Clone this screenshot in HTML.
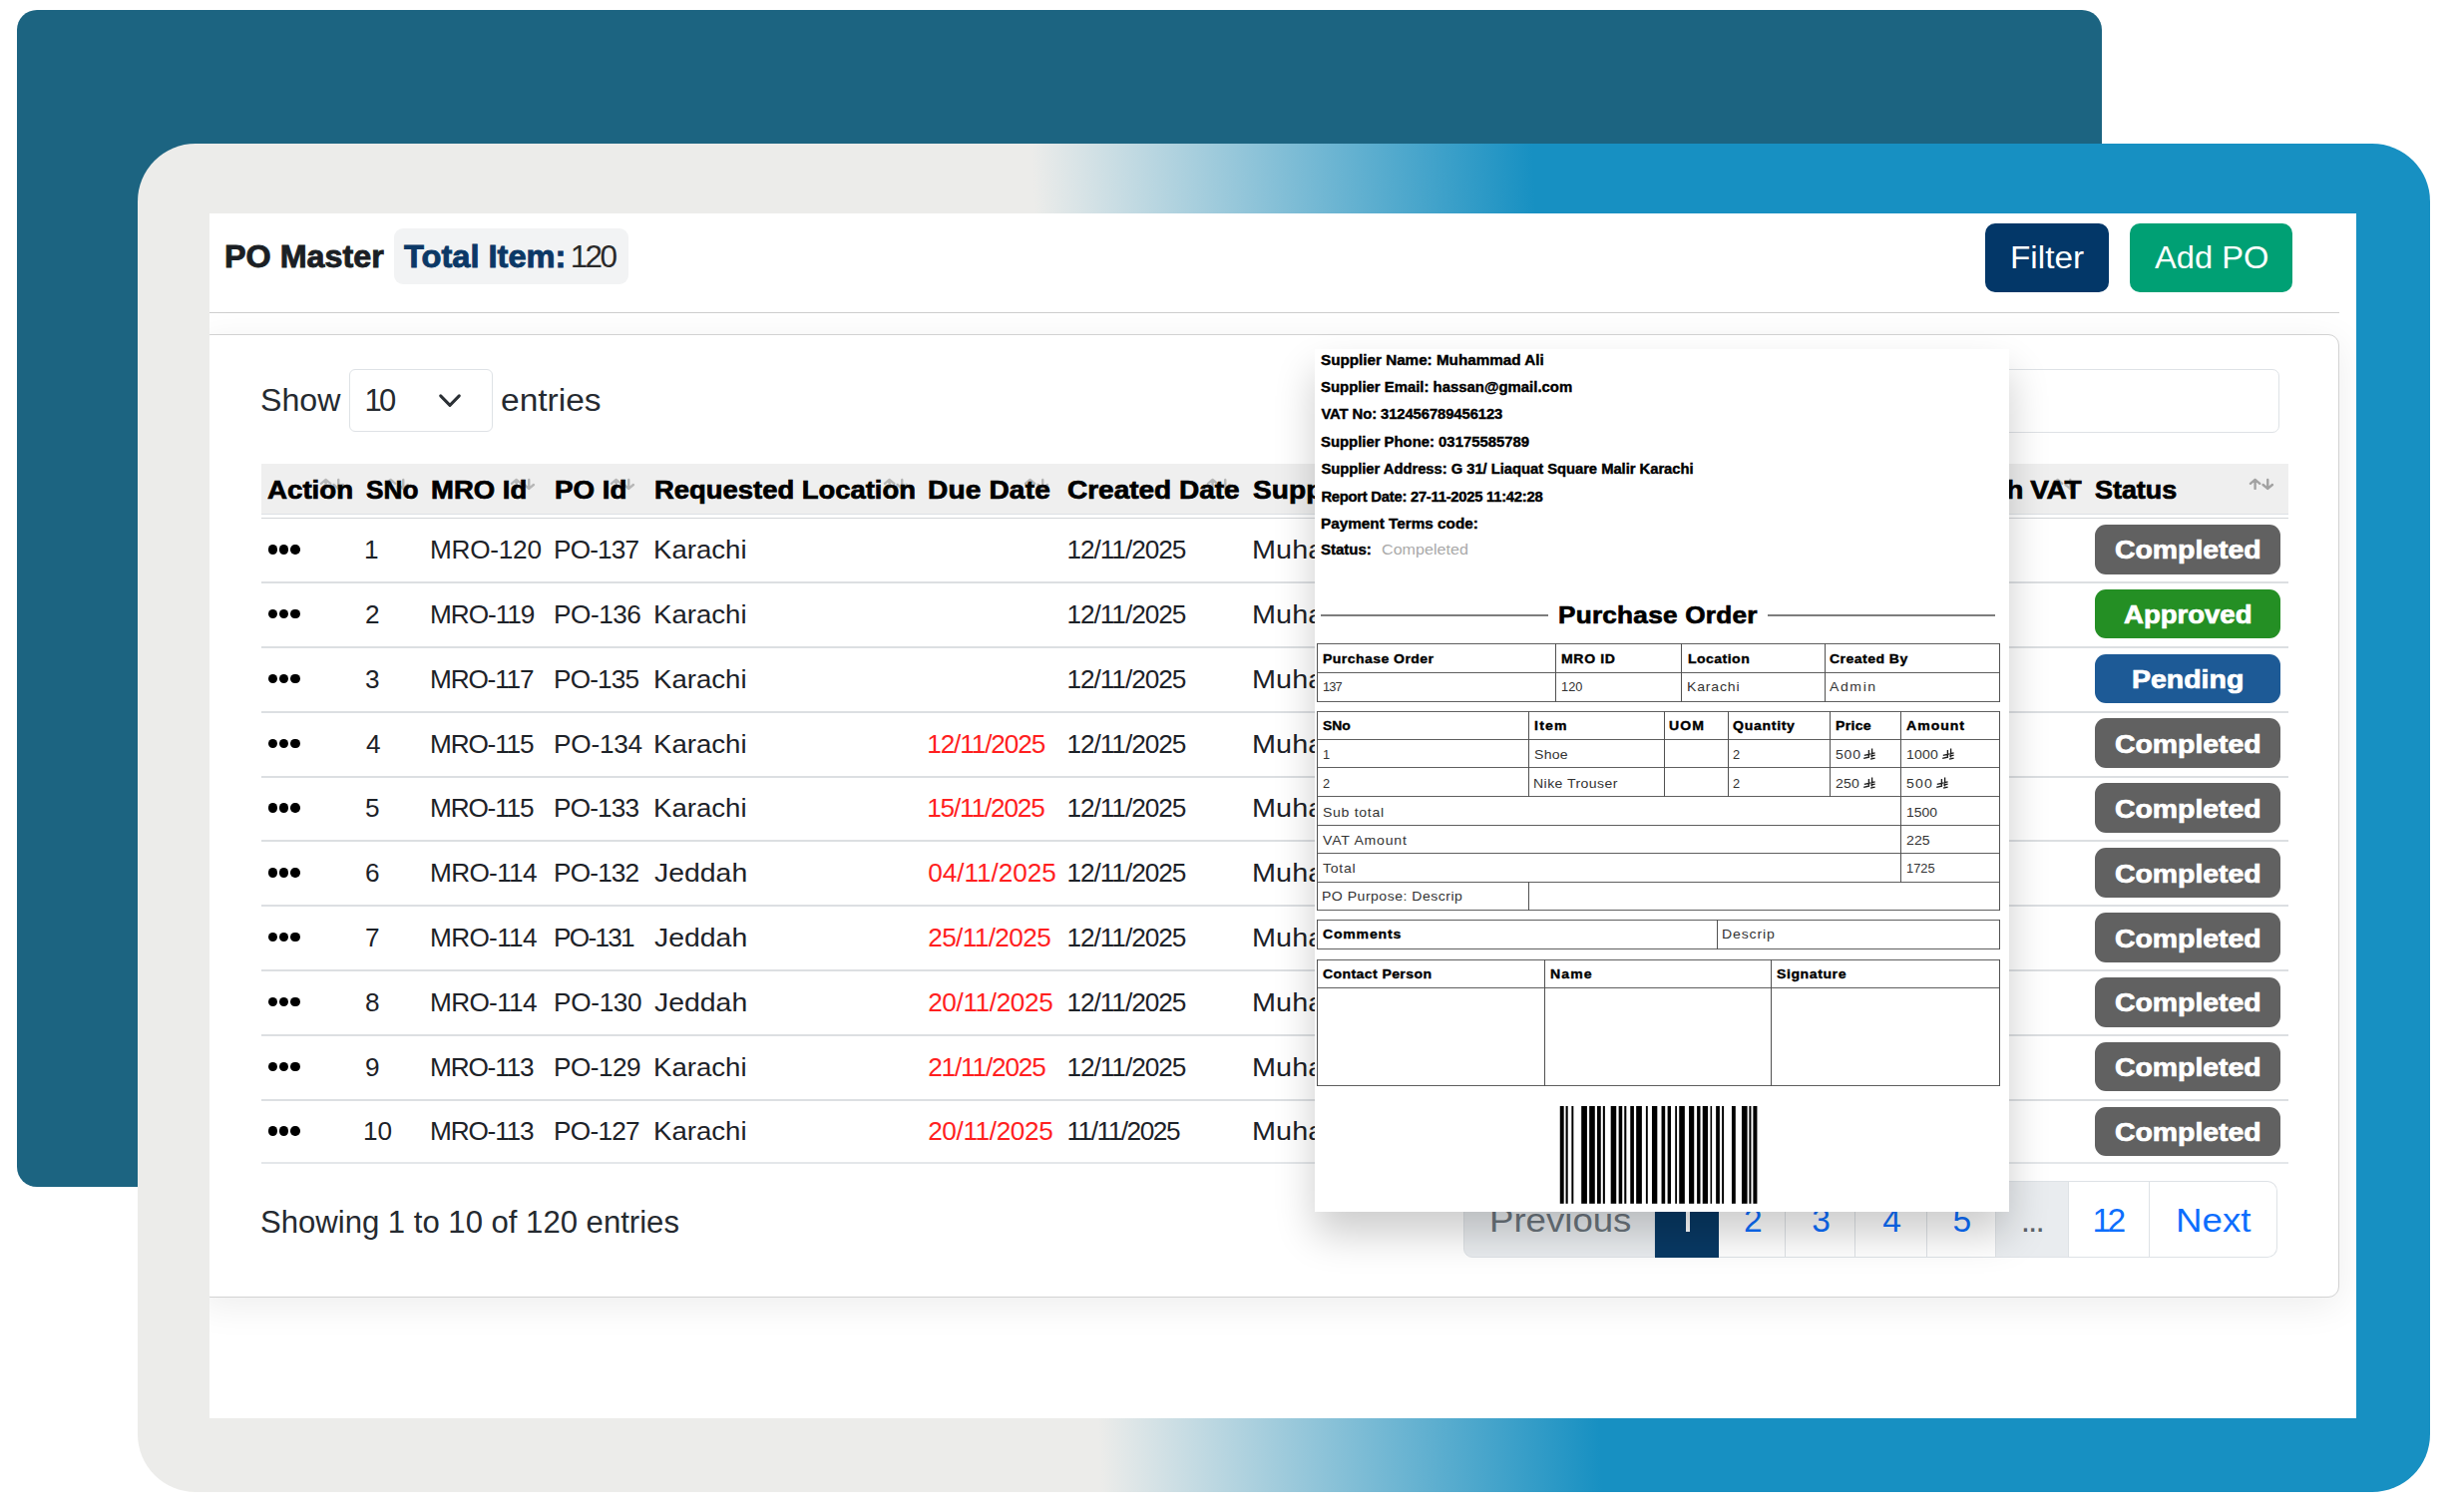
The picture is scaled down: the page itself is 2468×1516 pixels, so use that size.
<!DOCTYPE html>
<html lang="en"><head><meta charset="utf-8"><title>PO Master</title>
<style>
html,body{margin:0;padding:0;background:#fff}
body{width:2468px;height:1516px;position:relative;overflow:hidden;font-family:"Liberation Sans", sans-serif}
.b,.t{position:absolute}
.t{white-space:nowrap;line-height:1;transform-origin:0 0}
#back{left:17px;top:10px;width:2090px;height:1180px;background:#1c6481;border-radius:20px}
#panel{left:138px;top:144px;width:2298px;height:1352px;border-radius:58px;background:linear-gradient(87deg,#ececea 40.8%,#1790c2 62%)}
#card{left:210px;top:214px;width:2152px;height:1208px;background:#fff;overflow:hidden}
#ov{left:1318px;top:350px;width:696px;height:865px;background:#fff;box-shadow:0 22px 38px rgba(0,0,0,.20)}
</style></head>
<body>
<div id="back" class="b"></div>
<div id="panel" class="b"></div>
<div id="card" class="b">
<div class="b" style="left:184.5px;top:14.5px;width:235.2px;height:56.5px;background:#f2f3f4;border-radius:9px"></div>
<div class="b" style="left:1780.4px;top:9.5px;width:123.5px;height:69px;background:#033768;border-radius:10px"></div>
<div class="b" style="left:1925.2px;top:9.5px;width:163.1px;height:69px;background:#00a074;border-radius:10px"></div>
<div class="b" style="left:0px;top:98.6px;width:2134.7px;height:1.2px;background:#cfcfcf"></div>
<div class="b" style="left:-10px;top:121px;width:2144.5px;height:965.5px;border:1px solid #d2d2d2;border-radius:11px;box-shadow:0 8px 38px rgba(0,0,0,.075);box-sizing:border-box;background:#fff"></div>
<div class="b" style="left:140px;top:156px;width:144px;height:62.5px;border:1px solid #dee2e6;border-radius:6px;box-sizing:border-box;background:#fff"></div>
<svg class="b" style="left:228px;top:179.6px" width="26" height="17" viewBox="0 0 26 17"><path d="M3.7 2.9 L13 12.4 L22.3 2.9" fill="none" stroke="#2b3035" stroke-width="3" stroke-linecap="round" stroke-linejoin="round"/></svg>
<div class="b" style="left:1780px;top:156px;width:295px;height:63.5px;border:1px solid #dee2e6;border-radius:7px;box-sizing:border-box;background:#fff"></div>
<div class="b" style="left:52px;top:251px;width:2031.5px;height:50px;background:#efefef"></div>
<div class="b" style="left:52px;top:301px;width:2031.5px;height:1px;background:#dde1e5"></div>
<div class="b" style="left:52px;top:305px;width:2031.5px;height:1px;background:#d3d6d9"></div>
<div class="b" style="left:52px;top:369px;width:2031.5px;height:2px;background:#dcdfe2"></div>
<div class="b" style="left:52px;top:434px;width:2031.5px;height:2px;background:#dcdfe2"></div>
<div class="b" style="left:52px;top:499px;width:2031.5px;height:2px;background:#dcdfe2"></div>
<div class="b" style="left:52px;top:564px;width:2031.5px;height:2px;background:#dcdfe2"></div>
<div class="b" style="left:52px;top:628px;width:2031.5px;height:2px;background:#dcdfe2"></div>
<div class="b" style="left:52px;top:693px;width:2031.5px;height:2px;background:#dcdfe2"></div>
<div class="b" style="left:52px;top:758px;width:2031.5px;height:2px;background:#dcdfe2"></div>
<div class="b" style="left:52px;top:823px;width:2031.5px;height:2px;background:#dcdfe2"></div>
<div class="b" style="left:52px;top:888px;width:2031.5px;height:2px;background:#dcdfe2"></div>
<div class="b" style="left:52px;top:951px;width:2031.5px;height:2px;background:#e4e7ea"></div>
<svg class="b" style="left:110px;top:265px" width="26" height="13" viewBox="0 0 26 13"><path d="M6.6 10.9 V1.9 M1.9 5.8 L6.6 1.9 L11.3 5.8 M19.25 1.9 V10.9 M14.55 7 L19.25 10.9 L23.95 7" fill="none" stroke="#b7b7b7" stroke-width="2.4" stroke-linecap="round" stroke-linejoin="round"/></svg>
<svg class="b" style="left:175px;top:265px" width="26" height="13" viewBox="0 0 26 13"><path d="M6.6 10.9 V1.9 M1.9 5.8 L6.6 1.9 L11.3 5.8 M19.25 1.9 V10.9 M14.55 7 L19.25 10.9 L23.95 7" fill="none" stroke="#b7b7b7" stroke-width="2.4" stroke-linecap="round" stroke-linejoin="round"/></svg>
<svg class="b" style="left:300.5px;top:265px" width="26" height="13" viewBox="0 0 26 13"><path d="M6.6 10.9 V1.9 M1.9 5.8 L6.6 1.9 L11.3 5.8 M19.25 1.9 V10.9 M14.55 7 L19.25 10.9 L23.95 7" fill="none" stroke="#b7b7b7" stroke-width="2.4" stroke-linecap="round" stroke-linejoin="round"/></svg>
<svg class="b" style="left:400.5px;top:265px" width="26" height="13" viewBox="0 0 26 13"><path d="M6.6 10.9 V1.9 M1.9 5.8 L6.6 1.9 L11.3 5.8 M19.25 1.9 V10.9 M14.55 7 L19.25 10.9 L23.95 7" fill="none" stroke="#b7b7b7" stroke-width="2.4" stroke-linecap="round" stroke-linejoin="round"/></svg>
<svg class="b" style="left:674.5px;top:265px" width="26" height="13" viewBox="0 0 26 13"><path d="M6.6 10.9 V1.9 M1.9 5.8 L6.6 1.9 L11.3 5.8 M19.25 1.9 V10.9 M14.55 7 L19.25 10.9 L23.95 7" fill="none" stroke="#b7b7b7" stroke-width="2.4" stroke-linecap="round" stroke-linejoin="round"/></svg>
<svg class="b" style="left:816px;top:265px" width="26" height="13" viewBox="0 0 26 13"><path d="M6.6 10.9 V1.9 M1.9 5.8 L6.6 1.9 L11.3 5.8 M19.25 1.9 V10.9 M14.55 7 L19.25 10.9 L23.95 7" fill="none" stroke="#b7b7b7" stroke-width="2.4" stroke-linecap="round" stroke-linejoin="round"/></svg>
<svg class="b" style="left:999px;top:265px" width="26" height="13" viewBox="0 0 26 13"><path d="M6.6 10.9 V1.9 M1.9 5.8 L6.6 1.9 L11.3 5.8 M19.25 1.9 V10.9 M14.55 7 L19.25 10.9 L23.95 7" fill="none" stroke="#b7b7b7" stroke-width="2.4" stroke-linecap="round" stroke-linejoin="round"/></svg>
<svg class="b" style="left:1846px;top:265px" width="26" height="13" viewBox="0 0 26 13"><path d="M6.6 10.9 V1.9 M1.9 5.8 L6.6 1.9 L11.3 5.8 M19.25 1.9 V10.9 M14.55 7 L19.25 10.9 L23.95 7" fill="none" stroke="#b7b7b7" stroke-width="2.4" stroke-linecap="round" stroke-linejoin="round"/></svg>
<svg class="b" style="left:2044px;top:265px" width="26" height="13" viewBox="0 0 26 13"><path d="M6.6 10.9 V1.9 M1.9 5.8 L6.6 1.9 L11.3 5.8 M19.25 1.9 V10.9 M14.55 7 L19.25 10.9 L23.95 7" fill="none" stroke="#a2a2a2" stroke-width="2.4" stroke-linecap="round" stroke-linejoin="round"/></svg>
<div class="b" style="left:58.8px;top:332.2px;width:9.4px;height:9.4px;background:#000;border-radius:50%"></div>
<div class="b" style="left:70px;top:332.2px;width:9.4px;height:9.4px;background:#000;border-radius:50%"></div>
<div class="b" style="left:81.3px;top:332.2px;width:9.4px;height:9.4px;background:#000;border-radius:50%"></div>
<div class="b" style="left:1889.6px;top:311.9px;width:186.7px;height:49.7px;background:#616161;border-radius:11px"></div>
<div class="b" style="left:58.8px;top:397px;width:9.4px;height:9.4px;background:#000;border-radius:50%"></div>
<div class="b" style="left:70px;top:397px;width:9.4px;height:9.4px;background:#000;border-radius:50%"></div>
<div class="b" style="left:81.3px;top:397px;width:9.4px;height:9.4px;background:#000;border-radius:50%"></div>
<div class="b" style="left:1889.6px;top:376.75px;width:186.7px;height:49.7px;background:#248f24;border-radius:11px"></div>
<div class="b" style="left:58.8px;top:461.8px;width:9.4px;height:9.4px;background:#000;border-radius:50%"></div>
<div class="b" style="left:70px;top:461.8px;width:9.4px;height:9.4px;background:#000;border-radius:50%"></div>
<div class="b" style="left:81.3px;top:461.8px;width:9.4px;height:9.4px;background:#000;border-radius:50%"></div>
<div class="b" style="left:1889.6px;top:441.6px;width:186.7px;height:49.7px;background:#1d5a96;border-radius:11px"></div>
<div class="b" style="left:58.8px;top:526.6px;width:9.4px;height:9.4px;background:#000;border-radius:50%"></div>
<div class="b" style="left:70px;top:526.6px;width:9.4px;height:9.4px;background:#000;border-radius:50%"></div>
<div class="b" style="left:81.3px;top:526.6px;width:9.4px;height:9.4px;background:#000;border-radius:50%"></div>
<div class="b" style="left:1889.6px;top:506.45px;width:186.7px;height:49.7px;background:#616161;border-radius:11px"></div>
<div class="b" style="left:58.8px;top:591.4px;width:9.4px;height:9.4px;background:#000;border-radius:50%"></div>
<div class="b" style="left:70px;top:591.4px;width:9.4px;height:9.4px;background:#000;border-radius:50%"></div>
<div class="b" style="left:81.3px;top:591.4px;width:9.4px;height:9.4px;background:#000;border-radius:50%"></div>
<div class="b" style="left:1889.6px;top:571.3px;width:186.7px;height:49.7px;background:#616161;border-radius:11px"></div>
<div class="b" style="left:58.8px;top:656.2px;width:9.4px;height:9.4px;background:#000;border-radius:50%"></div>
<div class="b" style="left:70px;top:656.2px;width:9.4px;height:9.4px;background:#000;border-radius:50%"></div>
<div class="b" style="left:81.3px;top:656.2px;width:9.4px;height:9.4px;background:#000;border-radius:50%"></div>
<div class="b" style="left:1889.6px;top:636.15px;width:186.7px;height:49.7px;background:#616161;border-radius:11px"></div>
<div class="b" style="left:58.8px;top:721px;width:9.4px;height:9.4px;background:#000;border-radius:50%"></div>
<div class="b" style="left:70px;top:721px;width:9.4px;height:9.4px;background:#000;border-radius:50%"></div>
<div class="b" style="left:81.3px;top:721px;width:9.4px;height:9.4px;background:#000;border-radius:50%"></div>
<div class="b" style="left:1889.6px;top:701px;width:186.7px;height:49.7px;background:#616161;border-radius:11px"></div>
<div class="b" style="left:58.8px;top:785.8px;width:9.4px;height:9.4px;background:#000;border-radius:50%"></div>
<div class="b" style="left:70px;top:785.8px;width:9.4px;height:9.4px;background:#000;border-radius:50%"></div>
<div class="b" style="left:81.3px;top:785.8px;width:9.4px;height:9.4px;background:#000;border-radius:50%"></div>
<div class="b" style="left:1889.6px;top:765.85px;width:186.7px;height:49.7px;background:#616161;border-radius:11px"></div>
<div class="b" style="left:58.8px;top:850.6px;width:9.4px;height:9.4px;background:#000;border-radius:50%"></div>
<div class="b" style="left:70px;top:850.6px;width:9.4px;height:9.4px;background:#000;border-radius:50%"></div>
<div class="b" style="left:81.3px;top:850.6px;width:9.4px;height:9.4px;background:#000;border-radius:50%"></div>
<div class="b" style="left:1889.6px;top:830.7px;width:186.7px;height:49.7px;background:#616161;border-radius:11px"></div>
<div class="b" style="left:58.8px;top:915.4px;width:9.4px;height:9.4px;background:#000;border-radius:50%"></div>
<div class="b" style="left:70px;top:915.4px;width:9.4px;height:9.4px;background:#000;border-radius:50%"></div>
<div class="b" style="left:81.3px;top:915.4px;width:9.4px;height:9.4px;background:#000;border-radius:50%"></div>
<div class="b" style="left:1889.6px;top:895.55px;width:186.7px;height:49.7px;background:#616161;border-radius:11px"></div>
<div class="b" style="left:1256.5px;top:970.4px;width:192.5px;height:76.2px;background:#e9ecef;box-sizing:border-box;border:1px solid #dee2e6;border-radius:9px 0 0 9px;"></div>
<div class="b" style="left:1449px;top:970.4px;width:64.4px;height:76.2px;background:#083964;box-sizing:border-box;border:1px solid #083964;border-left-width:0;"></div>
<div class="b" style="left:1513.4px;top:970.4px;width:67px;height:76.2px;background:#fff;box-sizing:border-box;border:1px solid #dee2e6;border-left-width:0;"></div>
<div class="b" style="left:1580.4px;top:970.4px;width:69.3px;height:76.2px;background:#fff;box-sizing:border-box;border:1px solid #dee2e6;border-left-width:0;"></div>
<div class="b" style="left:1649.7px;top:970.4px;width:72.6px;height:76.2px;background:#fff;box-sizing:border-box;border:1px solid #dee2e6;border-left-width:0;"></div>
<div class="b" style="left:1722.3px;top:970.4px;width:68.7px;height:76.2px;background:#fff;box-sizing:border-box;border:1px solid #dee2e6;border-left-width:0;"></div>
<div class="b" style="left:1791px;top:970.4px;width:73px;height:76.2px;background:#e9ecef;box-sizing:border-box;border:1px solid #dee2e6;border-left-width:0;"></div>
<div class="b" style="left:1864px;top:970.4px;width:80.7px;height:76.2px;background:#fff;box-sizing:border-box;border:1px solid #dee2e6;border-left-width:0;"></div>
<div class="b" style="left:1944.7px;top:970.4px;width:128.8px;height:76.2px;background:#fff;box-sizing:border-box;border:1px solid #dee2e6;border-left-width:0;border-radius:0 10px 10px 0;"></div>
<div class="b" style="left:1480px;top:986px;width:4px;height:35px;background:#fff"></div>
<span class="t" style="left:15.45px;top:27.53px;font-size:31.5px;font-weight:700;-webkit-text-stroke:0.88px #1b1f24;transform:scaleX(1.0257);color:#1b1f24">PO Master</span>
<span class="t" style="left:194.7px;top:27.53px;font-size:31.5px;font-weight:700;-webkit-text-stroke:0.88px #0b3866;transform:scaleX(1.0354);color:#0b3866">Total Item:</span>
<span class="t" style="left:361.7px;top:27.53px;font-size:31.5px;letter-spacing:-2.62px;color:#2a2a2a">120</span>
<span class="t" style="left:1804.65px;top:28.85px;font-size:31px;transform:scaleX(1.0742);color:#ffffff">Filter</span>
<span class="t" style="left:1950.4px;top:28.85px;font-size:31px;transform:scaleX(1.0526);color:#ffffff">Add PO</span>
<span class="t" style="left:50.96px;top:171.55px;font-size:31px;transform:scaleX(1.0368);color:#252a30">Show</span>
<span class="t" style="left:155.4px;top:171.55px;font-size:31px;letter-spacing:-2.64px;color:#252a30">10</span>
<span class="t" style="left:291.92px;top:171.55px;font-size:31px;transform:scaleX(1.0814);color:#252a30">entries</span>
<span class="t" style="left:58.4px;top:264.51px;font-size:25.5px;font-weight:700;-webkit-text-stroke:0.71px #000;transform:scaleX(1.0855);color:#000">Action</span>
<span class="t" style="left:157px;top:264.51px;font-size:25.5px;font-weight:700;-webkit-text-stroke:0.71px #000;transform:scaleX(1.0273);color:#000">SNo</span>
<span class="t" style="left:221.92px;top:264.51px;font-size:25.5px;font-weight:700;-webkit-text-stroke:0.71px #000;transform:scaleX(1.0789);color:#000">MRO Id</span>
<span class="t" style="left:346.01px;top:264.51px;font-size:25.5px;font-weight:700;-webkit-text-stroke:0.71px #000;transform:scaleX(1.0889);color:#000">PO Id</span>
<span class="t" style="left:446.33px;top:264.51px;font-size:25.5px;font-weight:700;-webkit-text-stroke:0.71px #000;transform:scaleX(1.075);color:#000">Requested Location</span>
<span class="t" style="left:720.1px;top:264.51px;font-size:25.5px;letter-spacing:0.15px;font-weight:700;-webkit-text-stroke:0.71px #000;transform:scaleX(1.1);color:#000">Due Date</span>
<span class="t" style="left:860.3px;top:264.51px;font-size:25.5px;font-weight:700;-webkit-text-stroke:0.71px #000;transform:scaleX(1.0972);color:#000">Created Date</span>
<span class="t" style="left:1046.2px;top:264.51px;font-size:25.5px;letter-spacing:0.1px;font-weight:700;-webkit-text-stroke:0.71px #000;transform:scaleX(1.1);color:#000">Supplier Name</span>
<span class="t" style="left:1692.61px;top:264.51px;font-size:25.5px;letter-spacing:-0.35px;font-weight:700;-webkit-text-stroke:0.71px #000;transform:scaleX(1.1);color:#000">Total with VAT</span>
<span class="t" style="left:1890px;top:264.51px;font-size:25.5px;font-weight:700;-webkit-text-stroke:0.71px #000;transform:scaleX(1.0547);color:#000">Status</span>
<span class="t" style="left:155px;top:324.22px;font-size:26.2px;color:#1d2228">1</span>
<span class="t" style="left:221px;top:324.22px;font-size:26.2px;letter-spacing:-0.26px;color:#1d2228">MRO-120</span>
<span class="t" style="left:345.1px;top:324.22px;font-size:26.2px;letter-spacing:-0.88px;color:#1d2228">PO-137</span>
<span class="t" style="left:445.29px;top:324.22px;font-size:26.2px;transform:scaleX(1.0538);color:#1d2228">Karachi</span>
<span class="t" style="left:859.4px;top:324.22px;font-size:26.2px;letter-spacing:-1.01px;color:#1d2228">12/11/2025</span>
<span class="t" style="left:1045.2px;top:324.22px;font-size:26.2px;letter-spacing:0.1px;transform:scaleX(1.1);color:#1d2228">Muhammad Ali</span>
<span class="t" style="left:1909.82px;top:324.45px;font-size:26.4px;font-weight:700;-webkit-text-stroke:0.74px #fff;transform:scaleX(1.0757);color:#fff">Completed</span>
<span class="t" style="left:156px;top:389.02px;font-size:26.2px;color:#1d2228">2</span>
<span class="t" style="left:221px;top:389.02px;font-size:26.2px;letter-spacing:-1.03px;color:#1d2228">MRO-119</span>
<span class="t" style="left:345.1px;top:389.02px;font-size:26.2px;letter-spacing:-0.5px;color:#1d2228">PO-136</span>
<span class="t" style="left:445.29px;top:389.02px;font-size:26.2px;transform:scaleX(1.0538);color:#1d2228">Karachi</span>
<span class="t" style="left:859.4px;top:389.02px;font-size:26.2px;letter-spacing:-1.01px;color:#1d2228">12/11/2025</span>
<span class="t" style="left:1045.2px;top:389.02px;font-size:26.2px;letter-spacing:0.1px;transform:scaleX(1.1);color:#1d2228">Muhammad Ali</span>
<span class="t" style="left:1919.4px;top:389.3px;font-size:26.4px;font-weight:700;-webkit-text-stroke:0.74px #fff;transform:scaleX(1.0431);color:#fff">Approved</span>
<span class="t" style="left:156px;top:453.82px;font-size:26.2px;color:#1d2228">3</span>
<span class="t" style="left:221px;top:453.82px;font-size:26.2px;letter-spacing:-1.17px;color:#1d2228">MRO-117</span>
<span class="t" style="left:345.1px;top:453.82px;font-size:26.2px;letter-spacing:-0.88px;color:#1d2228">PO-135</span>
<span class="t" style="left:445.29px;top:453.82px;font-size:26.2px;transform:scaleX(1.0538);color:#1d2228">Karachi</span>
<span class="t" style="left:859.4px;top:453.82px;font-size:26.2px;letter-spacing:-1.01px;color:#1d2228">12/11/2025</span>
<span class="t" style="left:1045.2px;top:453.82px;font-size:26.2px;letter-spacing:0.1px;transform:scaleX(1.1);color:#1d2228">Muhammad Ali</span>
<span class="t" style="left:1926.92px;top:454.15px;font-size:26.4px;font-weight:700;-webkit-text-stroke:0.74px #fff;transform:scaleX(1.0787);color:#fff">Pending</span>
<span class="t" style="left:157px;top:518.62px;font-size:26.2px;color:#1d2228">4</span>
<span class="t" style="left:221px;top:518.62px;font-size:26.2px;letter-spacing:-1.17px;color:#1d2228">MRO-115</span>
<span class="t" style="left:345.1px;top:518.62px;font-size:26.2px;letter-spacing:-0.24px;color:#1d2228">PO-134</span>
<span class="t" style="left:445.29px;top:518.62px;font-size:26.2px;transform:scaleX(1.0538);color:#1d2228">Karachi</span>
<span class="t" style="left:719.2px;top:518.62px;font-size:26.2px;letter-spacing:-1.12px;color:#ff1f1f">12/11/2025</span>
<span class="t" style="left:859.4px;top:518.62px;font-size:26.2px;letter-spacing:-1.01px;color:#1d2228">12/11/2025</span>
<span class="t" style="left:1045.2px;top:518.62px;font-size:26.2px;letter-spacing:0.1px;transform:scaleX(1.1);color:#1d2228">Muhammad Ali</span>
<span class="t" style="left:1909.82px;top:519px;font-size:26.4px;font-weight:700;-webkit-text-stroke:0.74px #fff;transform:scaleX(1.0757);color:#fff">Completed</span>
<span class="t" style="left:156px;top:583.42px;font-size:26.2px;color:#1d2228">5</span>
<span class="t" style="left:221px;top:583.42px;font-size:26.2px;letter-spacing:-1.17px;color:#1d2228">MRO-115</span>
<span class="t" style="left:345.1px;top:583.42px;font-size:26.2px;letter-spacing:-0.88px;color:#1d2228">PO-133</span>
<span class="t" style="left:445.29px;top:583.42px;font-size:26.2px;transform:scaleX(1.0538);color:#1d2228">Karachi</span>
<span class="t" style="left:719.2px;top:583.42px;font-size:26.2px;letter-spacing:-1.17px;color:#ff1f1f">15/11/2025</span>
<span class="t" style="left:859.4px;top:583.42px;font-size:26.2px;letter-spacing:-1.01px;color:#1d2228">12/11/2025</span>
<span class="t" style="left:1045.2px;top:583.42px;font-size:26.2px;letter-spacing:0.1px;transform:scaleX(1.1);color:#1d2228">Muhammad Ali</span>
<span class="t" style="left:1909.82px;top:583.85px;font-size:26.4px;font-weight:700;-webkit-text-stroke:0.74px #fff;transform:scaleX(1.0757);color:#fff">Completed</span>
<span class="t" style="left:156px;top:648.22px;font-size:26.2px;color:#1d2228">6</span>
<span class="t" style="left:221px;top:648.22px;font-size:26.2px;letter-spacing:-0.67px;color:#1d2228">MRO-114</span>
<span class="t" style="left:345.1px;top:648.22px;font-size:26.2px;letter-spacing:-0.84px;color:#1d2228">PO-132</span>
<span class="t" style="left:445.5px;top:648.22px;font-size:26.2px;transform:scaleX(1.0848);color:#1d2228">Jeddah</span>
<span class="t" style="left:720.2px;top:648.22px;font-size:26.2px;letter-spacing:-0.06px;color:#ff1f1f">04/11/2025</span>
<span class="t" style="left:859.4px;top:648.22px;font-size:26.2px;letter-spacing:-1.01px;color:#1d2228">12/11/2025</span>
<span class="t" style="left:1045.2px;top:648.22px;font-size:26.2px;letter-spacing:0.1px;transform:scaleX(1.1);color:#1d2228">Muhammad Ali</span>
<span class="t" style="left:1909.82px;top:648.7px;font-size:26.4px;font-weight:700;-webkit-text-stroke:0.74px #fff;transform:scaleX(1.0757);color:#fff">Completed</span>
<span class="t" style="left:156px;top:713.02px;font-size:26.2px;color:#1d2228">7</span>
<span class="t" style="left:221px;top:713.02px;font-size:26.2px;letter-spacing:-0.67px;color:#1d2228">MRO-114</span>
<span class="t" style="left:345.1px;top:713.02px;font-size:26.2px;letter-spacing:-1.74px;color:#1d2228">PO-131</span>
<span class="t" style="left:445.5px;top:713.02px;font-size:26.2px;transform:scaleX(1.0848);color:#1d2228">Jeddah</span>
<span class="t" style="left:720.2px;top:713.02px;font-size:26.2px;letter-spacing:-0.62px;color:#ff1f1f">25/11/2025</span>
<span class="t" style="left:859.4px;top:713.02px;font-size:26.2px;letter-spacing:-1.01px;color:#1d2228">12/11/2025</span>
<span class="t" style="left:1045.2px;top:713.02px;font-size:26.2px;letter-spacing:0.1px;transform:scaleX(1.1);color:#1d2228">Muhammad Ali</span>
<span class="t" style="left:1909.82px;top:713.55px;font-size:26.4px;font-weight:700;-webkit-text-stroke:0.74px #fff;transform:scaleX(1.0757);color:#fff">Completed</span>
<span class="t" style="left:156px;top:777.82px;font-size:26.2px;color:#1d2228">8</span>
<span class="t" style="left:221px;top:777.82px;font-size:26.2px;letter-spacing:-0.67px;color:#1d2228">MRO-114</span>
<span class="t" style="left:345.1px;top:777.82px;font-size:26.2px;letter-spacing:-0.34px;color:#1d2228">PO-130</span>
<span class="t" style="left:445.5px;top:777.82px;font-size:26.2px;transform:scaleX(1.0848);color:#1d2228">Jeddah</span>
<span class="t" style="left:720.2px;top:777.82px;font-size:26.2px;letter-spacing:-0.4px;color:#ff1f1f">20/11/2025</span>
<span class="t" style="left:859.4px;top:777.82px;font-size:26.2px;letter-spacing:-1.01px;color:#1d2228">12/11/2025</span>
<span class="t" style="left:1045.2px;top:777.82px;font-size:26.2px;letter-spacing:0.1px;transform:scaleX(1.1);color:#1d2228">Muhammad Ali</span>
<span class="t" style="left:1909.82px;top:778.4px;font-size:26.4px;font-weight:700;-webkit-text-stroke:0.74px #fff;transform:scaleX(1.0757);color:#fff">Completed</span>
<span class="t" style="left:156px;top:842.62px;font-size:26.2px;color:#1d2228">9</span>
<span class="t" style="left:221px;top:842.62px;font-size:26.2px;letter-spacing:-1.17px;color:#1d2228">MRO-113</span>
<span class="t" style="left:345.1px;top:842.62px;font-size:26.2px;letter-spacing:-0.54px;color:#1d2228">PO-129</span>
<span class="t" style="left:445.29px;top:842.62px;font-size:26.2px;transform:scaleX(1.0538);color:#1d2228">Karachi</span>
<span class="t" style="left:720.2px;top:842.62px;font-size:26.2px;letter-spacing:-1.17px;color:#ff1f1f">21/11/2025</span>
<span class="t" style="left:859.4px;top:842.62px;font-size:26.2px;letter-spacing:-1.01px;color:#1d2228">12/11/2025</span>
<span class="t" style="left:1045.2px;top:842.62px;font-size:26.2px;letter-spacing:0.1px;transform:scaleX(1.1);color:#1d2228">Muhammad Ali</span>
<span class="t" style="left:1909.82px;top:843.25px;font-size:26.4px;font-weight:700;-webkit-text-stroke:0.74px #fff;transform:scaleX(1.0757);color:#fff">Completed</span>
<span class="t" style="left:154px;top:907.42px;font-size:26.2px;color:#1d2228">10</span>
<span class="t" style="left:221px;top:907.42px;font-size:26.2px;letter-spacing:-1.17px;color:#1d2228">MRO-113</span>
<span class="t" style="left:345.1px;top:907.42px;font-size:26.2px;letter-spacing:-0.74px;color:#1d2228">PO-127</span>
<span class="t" style="left:445.29px;top:907.42px;font-size:26.2px;transform:scaleX(1.0538);color:#1d2228">Karachi</span>
<span class="t" style="left:720.2px;top:907.42px;font-size:26.2px;letter-spacing:-0.4px;color:#ff1f1f">20/11/2025</span>
<span class="t" style="left:859.4px;top:907.42px;font-size:26.2px;letter-spacing:-1.45px;color:#1d2228">11/11/2025</span>
<span class="t" style="left:1045.2px;top:907.42px;font-size:26.2px;letter-spacing:0.1px;transform:scaleX(1.1);color:#1d2228">Muhammad Ali</span>
<span class="t" style="left:1909.82px;top:908.1px;font-size:26.4px;font-weight:700;-webkit-text-stroke:0.74px #fff;transform:scaleX(1.0757);color:#fff">Completed</span>
<span class="t" style="left:51.4px;top:996.25px;font-size:31px;transform:scaleX(1.0027);color:#252a30">Showing 1 to 10 of 120 entries</span>
<span class="t" style="left:1282.61px;top:992.94px;font-size:33.5px;transform:scaleX(1.0926);color:#6c757d">Previous</span>
<span class="t" style="left:1538px;top:992.94px;font-size:33.5px;color:#0d6efd">2</span>
<span class="t" style="left:1606.3px;top:992.94px;font-size:33.5px;color:#0d6efd">3</span>
<span class="t" style="left:1677.2px;top:992.94px;font-size:33.5px;color:#0d6efd">4</span>
<span class="t" style="left:1747.6px;top:992.94px;font-size:33.5px;color:#0d6efd">5</span>
<span class="t" style="left:1815.7px;top:992.94px;font-size:33.5px;letter-spacing:-1.96px;color:#5c636a">...</span>
<span class="t" style="left:1887.4px;top:992.94px;font-size:33.5px;letter-spacing:-3.53px;color:#0d6efd">12</span>
<span class="t" style="left:1970.81px;top:992.94px;font-size:33.5px;transform:scaleX(1.0951);color:#0d6efd">Next</span>
</div>
<div id="ov" class="b">
<div class="b" style="left:6px;top:266px;width:228px;height:2px;background:#7d7d7d"></div>
<div class="b" style="left:454px;top:266px;width:228px;height:2px;background:#7d7d7d"></div>
<div class="b" style="left:2px;top:295px;width:685px;height:1px;background:#5f5f5f"></div>
<div class="b" style="left:2px;top:324px;width:685px;height:1px;background:#5f5f5f"></div>
<div class="b" style="left:2px;top:353px;width:685px;height:1px;background:#5f5f5f"></div>
<div class="b" style="left:2px;top:295px;width:1px;height:59px;background:#515151"></div>
<div class="b" style="left:241px;top:295px;width:1px;height:59px;background:#515151"></div>
<div class="b" style="left:367px;top:295px;width:1px;height:59px;background:#515151"></div>
<div class="b" style="left:511px;top:295px;width:1px;height:59px;background:#515151"></div>
<div class="b" style="left:686px;top:295px;width:1px;height:59px;background:#515151"></div>
<div class="b" style="left:2px;top:363px;width:685px;height:1px;background:#5f5f5f"></div>
<div class="b" style="left:2px;top:391px;width:685px;height:1px;background:#5f5f5f"></div>
<div class="b" style="left:2px;top:419px;width:685px;height:1px;background:#5f5f5f"></div>
<div class="b" style="left:2px;top:448px;width:685px;height:1px;background:#5f5f5f"></div>
<div class="b" style="left:2px;top:477px;width:685px;height:1px;background:#5f5f5f"></div>
<div class="b" style="left:2px;top:505px;width:685px;height:1px;background:#5f5f5f"></div>
<div class="b" style="left:2px;top:534px;width:685px;height:1px;background:#5f5f5f"></div>
<div class="b" style="left:2px;top:562px;width:685px;height:1px;background:#5f5f5f"></div>
<div class="b" style="left:2px;top:363px;width:1px;height:200px;background:#515151"></div>
<div class="b" style="left:686px;top:363px;width:1px;height:200px;background:#515151"></div>
<div class="b" style="left:214px;top:363px;width:1px;height:86px;background:#515151"></div>
<div class="b" style="left:350px;top:363px;width:1px;height:86px;background:#515151"></div>
<div class="b" style="left:414px;top:363px;width:1px;height:86px;background:#515151"></div>
<div class="b" style="left:516px;top:363px;width:1px;height:86px;background:#515151"></div>
<div class="b" style="left:587px;top:363px;width:1px;height:172px;background:#515151"></div>
<div class="b" style="left:214px;top:534px;width:1px;height:29px;background:#515151"></div>
<div class="b" style="left:2px;top:572px;width:685px;height:1px;background:#5f5f5f"></div>
<div class="b" style="left:2px;top:601px;width:685px;height:1px;background:#5f5f5f"></div>
<div class="b" style="left:2px;top:572px;width:1px;height:30px;background:#515151"></div>
<div class="b" style="left:403px;top:572px;width:1px;height:30px;background:#515151"></div>
<div class="b" style="left:686px;top:572px;width:1px;height:30px;background:#515151"></div>
<div class="b" style="left:2px;top:612px;width:685px;height:1px;background:#5f5f5f"></div>
<div class="b" style="left:2px;top:640px;width:685px;height:1px;background:#5f5f5f"></div>
<div class="b" style="left:2px;top:738px;width:685px;height:1px;background:#5f5f5f"></div>
<div class="b" style="left:2px;top:612px;width:1px;height:127px;background:#515151"></div>
<div class="b" style="left:230px;top:612px;width:1px;height:127px;background:#515151"></div>
<div class="b" style="left:457px;top:612px;width:1px;height:127px;background:#515151"></div>
<div class="b" style="left:686px;top:612px;width:1px;height:127px;background:#515151"></div>
<svg class="b" style="left:550px;top:399.7px" width="12" height="13" viewBox="0 0 12 13"><path d="M5.4 2.1 V9 M8.6 0.4 V9.6 M0.8 7.4 L11.6 4.9 M0.2 10.4 L6 9 M7.3 8.2 L11.6 7.2 M7.1 11.2 L11.6 10.1" fill="none" stroke="#1c1c1c" stroke-width="1.35"/></svg>
<svg class="b" style="left:628.7px;top:399.7px" width="12" height="13" viewBox="0 0 12 13"><path d="M5.4 2.1 V9 M8.6 0.4 V9.6 M0.8 7.4 L11.6 4.9 M0.2 10.4 L6 9 M7.3 8.2 L11.6 7.2 M7.1 11.2 L11.6 10.1" fill="none" stroke="#1c1c1c" stroke-width="1.35"/></svg>
<svg class="b" style="left:549.8px;top:429px" width="12" height="13" viewBox="0 0 12 13"><path d="M5.4 2.1 V9 M8.6 0.4 V9.6 M0.8 7.4 L11.6 4.9 M0.2 10.4 L6 9 M7.3 8.2 L11.6 7.2 M7.1 11.2 L11.6 10.1" fill="none" stroke="#1c1c1c" stroke-width="1.35"/></svg>
<svg class="b" style="left:623.1px;top:429px" width="12" height="13" viewBox="0 0 12 13"><path d="M5.4 2.1 V9 M8.6 0.4 V9.6 M0.8 7.4 L11.6 4.9 M0.2 10.4 L6 9 M7.3 8.2 L11.6 7.2 M7.1 11.2 L11.6 10.1" fill="none" stroke="#1c1c1c" stroke-width="1.35"/></svg>
<svg class="b" style="left:237px;top:758.6px" width="220" height="98" viewBox="0 0 220 98" shape-rendering="auto"><rect x="8.76" y="0" width="3.93" height="97.8"/><rect x="14.57" y="0" width="2.14" height="97.8"/><rect x="20.37" y="0" width="1.97" height="97.8"/><rect x="30.2" y="0" width="5.72" height="97.8"/><rect x="38.16" y="0" width="5.63" height="97.8"/><rect x="46.02" y="0" width="3.75" height="97.8"/><rect x="51.83" y="0" width="2.06" height="97.8"/><rect x="59.69" y="0" width="5.54" height="97.8"/><rect x="67.64" y="0" width="3.57" height="97.8"/><rect x="73.27" y="0" width="2.06" height="97.8"/><rect x="79.26" y="0" width="3.66" height="97.8"/><rect x="85.16" y="0" width="5.72" height="97.8"/><rect x="94.9" y="0" width="1.88" height="97.8"/><rect x="100.97" y="0" width="5.36" height="97.8"/><rect x="110.54" y="0" width="3.66" height="97.8"/><rect x="116.61" y="0" width="3.4" height="97.8"/><rect x="124.21" y="0" width="1.79" height="97.8"/><rect x="128.23" y="0" width="5.63" height="97.8"/><rect x="138.06" y="0" width="5.18" height="97.8"/><rect x="146.1" y="0" width="3.4" height="97.8"/><rect x="151.73" y="0" width="5.36" height="97.8"/><rect x="159.5" y="0" width="1.61" height="97.8"/><rect x="165.13" y="0" width="3.75" height="97.8"/><rect x="171.12" y="0" width="1.97" height="97.8"/><rect x="180.95" y="0" width="3.84" height="97.8"/><rect x="190.96" y="0" width="5.63" height="97.8"/><rect x="198.38" y="0" width="2.06" height="97.8"/><rect x="202.4" y="0" width="4.02" height="97.8"/></svg>
<span class="t" style="left:6.4px;top:4.47px;font-size:14.8px;font-weight:700;-webkit-text-stroke:0.41px #000;transform:scaleX(1.0291);color:#000">Supplier Name: Muhammad Ali</span>
<span class="t" style="left:6.4px;top:31.47px;font-size:14.8px;font-weight:700;-webkit-text-stroke:0.41px #000;transform:scaleX(1.0069);color:#000">Supplier Email: hassan@gmail.com</span>
<span class="t" style="left:6.4px;top:57.77px;font-size:14.8px;letter-spacing:-0.08px;font-weight:700;-webkit-text-stroke:0.41px #000;color:#000">VAT No: 312456789456123</span>
<span class="t" style="left:6.4px;top:85.87px;font-size:14.8px;font-weight:700;-webkit-text-stroke:0.41px #000;transform:scaleX(1.0046);color:#000">Supplier Phone: 03175585789</span>
<span class="t" style="left:6.4px;top:112.77px;font-size:14.8px;letter-spacing:-0.04px;font-weight:700;-webkit-text-stroke:0.41px #000;color:#000">Supplier Address: G 31/ Liaquat Square Malir Karachi</span>
<span class="t" style="left:6.4px;top:140.87px;font-size:14.8px;letter-spacing:-0.26px;font-weight:700;-webkit-text-stroke:0.41px #000;color:#000">Report Date: 27-11-2025 11:42:28</span>
<span class="t" style="left:6.4px;top:167.77px;font-size:14.8px;font-weight:700;-webkit-text-stroke:0.41px #000;transform:scaleX(1.0339);color:#000">Payment Terms code:</span>
<span class="t" style="left:6.4px;top:194.47px;font-size:14.8px;font-weight:700;-webkit-text-stroke:0.41px #000;transform:scaleX(1.0138);color:#000">Status:</span>
<span class="t" style="left:66.5px;top:194.47px;font-size:14.8px;transform:scaleX(1.0885);color:#a9a9a9">Compeleted</span>
<span class="t" style="left:243.6px;top:255.25px;font-size:23.8px;letter-spacing:0.21px;font-weight:700;-webkit-text-stroke:0.67px #000;transform:scaleX(1.1);color:#000">Purchase Order</span>
<span class="t" style="left:8px;top:304.86px;font-size:12.8px;letter-spacing:0.38px;font-weight:700;-webkit-text-stroke:0.36px #000;transform:scaleX(1.1);color:#000">Purchase Order</span>
<span class="t" style="left:247.1px;top:304.86px;font-size:12.8px;letter-spacing:0.57px;font-weight:700;-webkit-text-stroke:0.36px #000;transform:scaleX(1.1);color:#000">MRO ID</span>
<span class="t" style="left:374px;top:304.86px;font-size:12.8px;letter-spacing:0.4px;font-weight:700;-webkit-text-stroke:0.36px #000;transform:scaleX(1.1);color:#000">Location</span>
<span class="t" style="left:516px;top:304.86px;font-size:12.8px;letter-spacing:0.4px;font-weight:700;-webkit-text-stroke:0.36px #000;transform:scaleX(1.1);color:#000">Created By</span>
<span class="t" style="left:8px;top:333.26px;font-size:12.8px;letter-spacing:-0.87px;color:#333">137</span>
<span class="t" style="left:247.1px;top:333.26px;font-size:12.8px;letter-spacing:-0.02px;color:#333">120</span>
<span class="t" style="left:372.9px;top:333.26px;font-size:12.8px;letter-spacing:0.73px;transform:scaleX(1.1);color:#333">Karachi</span>
<span class="t" style="left:516px;top:333.26px;font-size:12.8px;letter-spacing:1.42px;transform:scaleX(1.1);color:#333">Admin</span>
<span class="t" style="left:7.7px;top:372.06px;font-size:12.8px;font-weight:700;-webkit-text-stroke:0.36px #000;transform:scaleX(1.0862);color:#000">SNo</span>
<span class="t" style="left:219.8px;top:372.06px;font-size:12.8px;letter-spacing:1.11px;font-weight:700;-webkit-text-stroke:0.36px #000;transform:scaleX(1.1);color:#000">Item</span>
<span class="t" style="left:355px;top:372.06px;font-size:12.8px;letter-spacing:0.95px;font-weight:700;-webkit-text-stroke:0.36px #000;transform:scaleX(1.1);color:#000">UOM</span>
<span class="t" style="left:419.1px;top:372.06px;font-size:12.8px;letter-spacing:0.63px;font-weight:700;-webkit-text-stroke:0.36px #000;transform:scaleX(1.1);color:#000">Quantity</span>
<span class="t" style="left:522.4px;top:372.06px;font-size:12.8px;letter-spacing:0.27px;font-weight:700;-webkit-text-stroke:0.36px #000;transform:scaleX(1.1);color:#000">Price</span>
<span class="t" style="left:593.3px;top:372.06px;font-size:12.8px;letter-spacing:0.89px;font-weight:700;-webkit-text-stroke:0.36px #000;transform:scaleX(1.1);color:#000">Amount</span>
<span class="t" style="left:8px;top:401.46px;font-size:12.8px;color:#333">1</span>
<span class="t" style="left:219.8px;top:401.46px;font-size:12.8px;letter-spacing:0.23px;transform:scaleX(1.1);color:#333">Shoe</span>
<span class="t" style="left:419.1px;top:401.46px;font-size:12.8px;color:#333">2</span>
<span class="t" style="left:522.4px;top:401.46px;font-size:12.8px;letter-spacing:0.7px;transform:scaleX(1.1);color:#333">500</span>
<span class="t" style="left:593.3px;top:401.46px;font-size:12.8px;letter-spacing:0.13px;transform:scaleX(1.1);color:#333">1000</span>
<span class="t" style="left:8px;top:429.76px;font-size:12.8px;color:#333">2</span>
<span class="t" style="left:218.7px;top:429.76px;font-size:12.8px;letter-spacing:0.38px;transform:scaleX(1.1);color:#333">Nike Trouser</span>
<span class="t" style="left:419.1px;top:429.76px;font-size:12.8px;color:#333">2</span>
<span class="t" style="left:522.4px;top:429.76px;font-size:12.8px;letter-spacing:0.2px;transform:scaleX(1.1);color:#333">250</span>
<span class="t" style="left:593.3px;top:429.76px;font-size:12.8px;letter-spacing:1.02px;transform:scaleX(1.1);color:#333">500</span>
<span class="t" style="left:8px;top:458.56px;font-size:12.8px;letter-spacing:0.63px;transform:scaleX(1.1);color:#333">Sub total</span>
<span class="t" style="left:593.3px;top:458.56px;font-size:12.8px;transform:scaleX(1.0899);color:#333">1500</span>
<span class="t" style="left:8px;top:487.06px;font-size:12.8px;letter-spacing:0.73px;transform:scaleX(1.1);color:#333">VAT Amount</span>
<span class="t" style="left:593.3px;top:487.06px;font-size:12.8px;letter-spacing:0.06px;transform:scaleX(1.1);color:#333">225</span>
<span class="t" style="left:8px;top:515.16px;font-size:12.8px;letter-spacing:0.66px;transform:scaleX(1.1);color:#333">Total</span>
<span class="t" style="left:593.3px;top:515.16px;font-size:12.8px;transform:scaleX(1.0053);color:#333">1725</span>
<span class="t" style="left:6.9px;top:543.16px;font-size:12.8px;letter-spacing:0.44px;transform:scaleX(1.1);color:#333">PO Purpose: Descrip</span>
<span class="t" style="left:7.7px;top:580.86px;font-size:12.8px;letter-spacing:0.71px;font-weight:700;-webkit-text-stroke:0.36px #000;transform:scaleX(1.1);color:#000">Comments</span>
<span class="t" style="left:407.9px;top:580.86px;font-size:12.8px;letter-spacing:0.77px;transform:scaleX(1.1);color:#333">Descrip</span>
<span class="t" style="left:7.7px;top:621.06px;font-size:12.8px;letter-spacing:0.35px;font-weight:700;-webkit-text-stroke:0.36px #000;transform:scaleX(1.1);color:#000">Contact Person</span>
<span class="t" style="left:235.8px;top:621.06px;font-size:12.8px;letter-spacing:0.97px;font-weight:700;-webkit-text-stroke:0.36px #000;transform:scaleX(1.1);color:#000">Name</span>
<span class="t" style="left:463.2px;top:621.06px;font-size:12.8px;letter-spacing:0.52px;font-weight:700;-webkit-text-stroke:0.36px #000;transform:scaleX(1.1);color:#000">Signature</span>
</div>
</body></html>
